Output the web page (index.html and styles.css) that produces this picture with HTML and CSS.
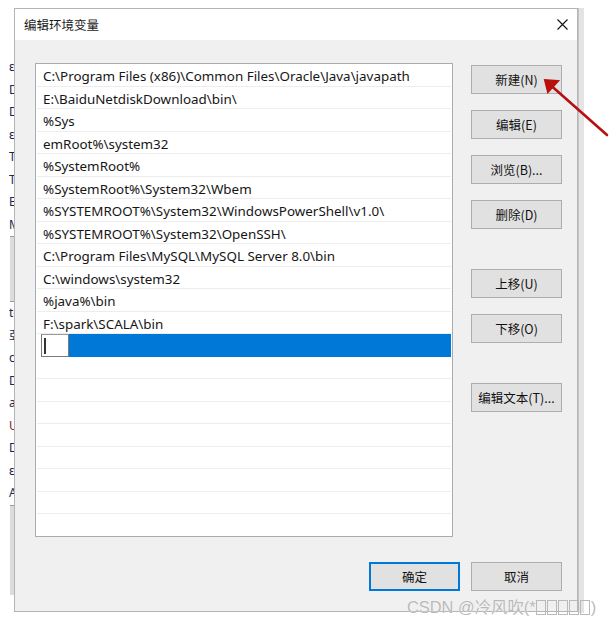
FILE: index.html
```html
<!DOCTYPE html>
<html lang="zh-CN">
<head>
    <meta charset="UTF-8">
    <title>编辑环境变量</title>
    <link rel="stylesheet" href="styles.css">
</head>
<body>

    <!-- Window behind the dialog (left edge) -->
    <div class="back-left">
        <div class="back-line">ε</div>
        <div class="back-line">Di</div>
        <div class="back-line">Di</div>
        <div class="back-line">ε</div>
        <div class="back-line">T</div>
        <div class="back-line">T</div>
        <div class="back-line">E</div>
        <div class="back-line">M</div>
        <div class="back-bar"></div>
        <div class="back-line">tc</div>
        <div class="back-line">亞</div>
        <div class="back-line">c</div>
        <div class="back-line">Di</div>
        <div class="back-line">ar</div>
        <div class="back-line red">U</div>
        <div class="back-line">D:</div>
        <div class="back-line">ε</div>
        <div class="back-line">A</div>
        <div class="back-bar low"></div>
    </div>

    <!-- Window behind the dialog (right edge) -->
    <div class="back-right"></div>

    <!-- Dialog -->
    <div class="dialog">
        <div class="title-bar">
            <span class="title">编辑环境变量</span>
            <svg class="close" width="11" height="11" viewBox="0 0 11 11">
                <path d="M0.5 0.5 L10.5 10.5 M10.5 0.5 L0.5 10.5" stroke="#111" stroke-width="1.1" fill="none"/>
            </svg>
        </div>

        <div class="dialog-body">
            <div class="main-row">
                <div class="path-list">
                    <div class="row">C:\Program Files (x86)\Common Files\Oracle\Java\javapath</div>
                    <div class="row">E:\BaiduNetdiskDownload\bin\</div>
                    <div class="row">%Sys</div>
                    <div class="row">emRoot%\system32</div>
                    <div class="row">%SystemRoot%</div>
                    <div class="row">%SystemRoot%\System32\Wbem</div>
                    <div class="row">%SYSTEMROOT%\System32\WindowsPowerShell\v1.0\</div>
                    <div class="row">%SYSTEMROOT%\System32\OpenSSH\</div>
                    <div class="row">C:\Program Files\MySQL\MySQL Server 8.0\bin</div>
                    <div class="row">C:\windows\system32</div>
                    <div class="row">%java%\bin</div>
                    <div class="row">F:\spark\SCALA\bin</div>
                    <div class="row editing">
                        <div class="edit-box"><span class="caret"></span></div>
                        <div class="selected-fill"></div>
                    </div>
                    <div class="row"></div>
                    <div class="row"></div>
                    <div class="row"></div>
                    <div class="row"></div>
                    <div class="row"></div>
                    <div class="row"></div>
                    <div class="row"></div>
                    <div class="row last"></div>
                </div>

                <div class="side-buttons">
                    <button class="btn first">新建(N)</button>
                    <button class="btn">编辑(E)</button>
                    <button class="btn">浏览(B)...</button>
                    <button class="btn">删除(D)</button>
                    <button class="btn spaced">上移(U)</button>
                    <button class="btn">下移(O)</button>
                    <button class="btn spaced">编辑文本(T)...</button>
                </div>
            </div>

            <div class="footer">
                <button class="btn default">确定</button>
                <button class="btn">取消</button>
            </div>
        </div>
    </div>

    <!-- Red annotation arrow -->
    <svg class="arrow" width="70" height="64" viewBox="0 0 70 64">
        <path d="M66 60 L6 7" stroke="#b80f0f" stroke-width="2.6" fill="none" stroke-linecap="round"/>
        <path d="M17 6 L4 5 L7 17 Z" stroke="#b80f0f" stroke-width="2" fill="#b80f0f" stroke-linejoin="miter"/>
    </svg>

    <!-- Watermark -->
    <div class="watermark">CSDN @冷风吹(*<span class="tofu"></span><span class="tofu"></span><span class="tofu"></span><span class="tofu"></span><span class="tofu"></span>)</div>

</body>
</html>
```

FILE: styles.css
```css
/* General Reset */
* {
    margin: 0;
    padding: 0;
    box-sizing: border-box;
}

body {
    width: 611px;
    height: 625px;
    background-color: #ffffff;
    font-family: "Noto Sans", "Noto Sans CJK SC", sans-serif;
    font-size: 13px;
    color: #111;
    position: relative;
    overflow: hidden;
}

/* Windows behind the dialog */
.back-left {
    position: absolute;
    left: 0;
    top: 56px;
    width: 60px;
    height: 557px;
    padding-left: 9px;
}

.back-line {
    height: 22.5px;
    line-height: 22.5px;
    font-size: 12px;
    color: #1d2550;
    white-space: nowrap;
}

.back-line.red {
    color: #8a1a1a;
}

.back-bar {
    height: 66px;
    margin-left: 1px;
    background-color: #dcdcdc;
    border-top: 1px solid #9a9a9a;
    border-bottom: 1px solid #9a9a9a;
}

.back-bar.low {
    height: 90px;
    border-bottom: none;
}

.back-right {
    position: absolute;
    left: 578px;
    top: 8px;
    width: 6px;
    height: 605px;
    background-color: #e4e4e4;
    border-left: 1px solid #c4c4c4;
}

/* Dialog window */
.dialog {
    position: absolute;
    left: 14px;
    top: 8px;
    width: 564px;
    height: 604px;
    border: 1px solid #b4b4b4;
    display: flex;
    flex-direction: column;
    background-color: #f0f0f0;
}

.title-bar {
    height: 31px;
    background-color: #ffffff;
    display: flex;
    align-items: center;
    justify-content: space-between;
    padding: 0 9px 0 9px;
}

.title {
    font-family: "Noto Sans CJK SC", sans-serif;
    font-size: 12.5px;
    color: #1a1a1a;
}

.dialog-body {
    flex: 1;
    display: flex;
    flex-direction: column;
    padding: 23px 15px 20px 20px;
}

.main-row {
    display: flex;
}

/* Path list */
.path-list {
    width: 418px;
    height: 474px;
    background-color: #ffffff;
    border: 1px solid #a9abb3;
    padding: 0 1px;
}

.row {
    height: 22.5px;
    line-height: 21.5px;
    padding: 2px 0 0 6px;
    border-bottom: 1px solid #ededed;
    white-space: nowrap;
    overflow: hidden;
    font-size: 13.4px;
    color: #161616;
}

.row.last {
    border-bottom: none;
}

.row.editing {
    display: flex;
    padding: 0 0 0 4px;
    border-bottom: none;
}

.edit-box {
    width: 28px;
    height: 23px;
    background-color: #ffffff;
    border: 1px solid #7a7a7a;
    border-top-color: #9a9a9a;
    padding: 3px 0 0 2px;
}

.caret {
    display: block;
    width: 2px;
    height: 16px;
    background-color: #333;
}

.selected-fill {
    flex: 1;
    height: 100%;
    background-color: #0078d7;
}

/* Buttons */
.side-buttons {
    width: 91px;
    margin-left: 18px;
    display: flex;
    flex-direction: column;
}

.btn {
    width: 91px;
    height: 29px;
    background-color: #e1e1e1;
    border: 1px solid #adadad;
    font-family: "Noto Sans CJK SC", sans-serif;
    font-size: 12.5px;
    color: #111;
    margin-top: 16px;
}

.btn.first {
    margin-top: 2px;
}

.btn.spaced {
    margin-top: 40px;
}

.footer {
    margin-top: auto;
    display: flex;
    justify-content: flex-end;
    gap: 11px;
}

.footer .btn {
    margin-top: 0;
}

.btn.default {
    border: 2px solid #0078d7;
}

/* Annotation arrow */
.arrow {
    position: absolute;
    left: 541px;
    top: 75px;
}

/* Watermark */
.watermark {
    position: absolute;
    left: 407px;
    top: 594px;
    font-family: "Liberation Sans", "Noto Sans CJK SC", sans-serif;
    font-size: 16.4px;
    color: #b9b9b9;
    white-space: nowrap;
    text-shadow: 0 0 1px #ffffff;
}

.tofu {
    display: inline-block;
    width: 10px;
    height: 15px;
    border: 1px solid #b9b9b9;
    margin-right: 1px;
    vertical-align: -2px;
}
```
